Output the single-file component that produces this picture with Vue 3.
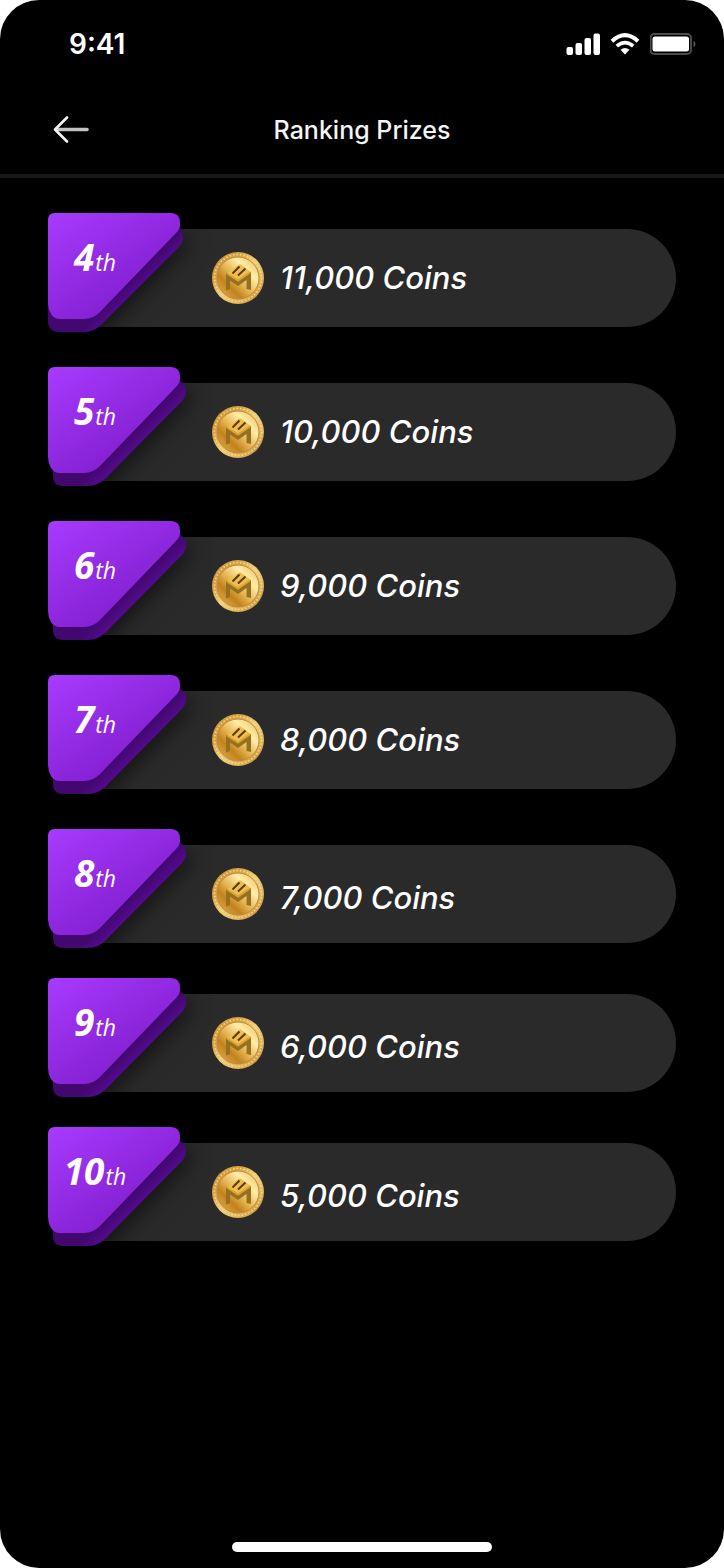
<script setup>
const upper = [
  { rank: 4, coins: '11,000' },
  { rank: 5, coins: '10,000' },
  { rank: 6, coins: '9,000' },
  { rank: 7, coins: '8,000' },
]
const lower = [
  { rank: 8, coins: '7,000' },
  { rank: 9, coins: '6,000' },
  { rank: 10, coins: '5,000' },
]
const prizes = [...upper, ...lower.map((p) => ({ ...p, low: true }))]

const face =
  'M7 0H123Q132 0 132 10V12Q132 16 128 20L52 99Q45 106 36 106H12Q6 106 3 101Q0 96 0 90V7Q0 0 7 0Z'
const wideBase =
  'M0 90V108Q0 119 12 119H36Q46 119 54 111L130 35Q135 30 135 24Q135 16 130 14Z'
const shiftedBase =
  'M5 90V108Q5 119 15 119H40Q50 119 58 111L134 34Q138 29 138 24Q138 16 132 14Z'
</script>

<template>
  <main class="screen">
    <div class="status">
      <time class="clock">9:41</time>
      <div class="indicators">
        <svg width="34" height="22" viewBox="0 0 34 22" fill="#fff" aria-label="Signal">
          <rect x="0.5" y="14" width="6.5" height="8" rx="2" />
          <rect x="9.5" y="10" width="6.5" height="12" rx="2" />
          <rect x="18.5" y="5" width="6.5" height="17" rx="2" />
          <rect x="27.5" y="0.5" width="6.5" height="21.5" rx="2" />
        </svg>
        <svg width="30" height="22" viewBox="0 0 30 22" fill="none" stroke="#fff" stroke-width="4" aria-label="Wi-Fi">
          <path d="M2 8.2Q15-3.8 28 8.2" />
          <path d="M6.8 13.2Q15 6 23.2 13.2" stroke-width="3.6" />
          <path d="M10.5 16.8Q15 13 19.5 16.8L15 21.5Z" fill="#fff" stroke="none" />
        </svg>
        <svg width="46" height="22" viewBox="0 0 46 22" aria-label="Battery">
          <rect x="0.5" y="1" width="40.5" height="20" rx="4" fill="none" stroke="#4b4b4b" stroke-width="2" />
          <rect x="2.5" y="3.5" width="36.5" height="15" rx="2.5" fill="#fff" />
          <path d="M43.5 7.5Q45.5 9 45.5 11Q45.5 13 43.5 14.5Z" fill="#555" />
        </svg>
      </div>
    </div>

    <header class="header">
      <button class="back" type="button" aria-label="Back">
        <svg width="36" height="28" viewBox="0 0 36 28" fill="none" stroke-linecap="round" stroke-linejoin="round">
          <path d="M3 13.5H34" stroke="#c4c2c2" stroke-width="3.5" />
          <path d="M14 1.5L2 13.5L14 25.5" stroke="#f2f2f2" stroke-width="2.6" />
        </svg>
      </button>
      <h1 class="title">Ranking Prizes</h1>
    </header>

    <svg class="defs" width="0" height="0" aria-hidden="true">
      <defs>
        <linearGradient id="face-fill" x1="0" y1="0" x2="0.8" y2="0.9">
          <stop offset="0" stop-color="#a83bff" />
          <stop offset="1" stop-color="#7d1bc9" />
        </linearGradient>
        <linearGradient id="base-fill" gradientUnits="userSpaceOnUse" x1="80" y1="70" x2="90" y2="80">
          <stop offset="0" stop-color="#42086f" />
          <stop offset="1" stop-color="#560a90" />
        </linearGradient>
        <linearGradient id="coin-rim" x1="0" y1="0" x2="1" y2="1">
          <stop offset="0" stop-color="#c58d32" />
          <stop offset="0.3" stop-color="#d9a546" />
          <stop offset="0.5" stop-color="#f0cf7a" />
          <stop offset="0.75" stop-color="#e0b45a" />
          <stop offset="1" stop-color="#b67820" />
        </linearGradient>
        <linearGradient id="coin-face" x1="0.1" y1="0.9" x2="0.9" y2="0.1">
          <stop offset="0" stop-color="#dba645" />
          <stop offset="0.25" stop-color="#c2821e" />
          <stop offset="0.45" stop-color="#e3b14c" />
          <stop offset="0.75" stop-color="#ffedaa" />
          <stop offset="1" stop-color="#f0cb70" />
        </linearGradient>
      </defs>
    </svg>

    <ol class="prizes">
      <li v-for="(p, i) in prizes" :key="p.rank" class="prize" :class="{ low: p.low }">
        <div class="badge">
          <svg class="plate" width="140" height="122" viewBox="0 0 140 122" aria-hidden="true">
            <path class="base" :d="i === 0 ? wideBase : shiftedBase" fill="url(#base-fill)" />
            <path :d="face" fill="url(#face-fill)" />
          </svg>
          <span class="rank"><b>{{ p.rank }}</b><span class="suffix">th</span></span>
        </div>
        <div class="bar">
          <svg class="coin" width="54" height="54" viewBox="0 0 54 54" aria-hidden="true">
            <circle cx="27" cy="27" r="26" fill="url(#coin-rim)" />
            <circle cx="27" cy="27" r="23.5" fill="none" stroke="#f5d98c" stroke-width="1.5" stroke-dasharray="1.5 2" />
            <circle cx="27" cy="27" r="21" fill="url(#coin-face)" stroke="#c08a38" stroke-width="1" />
            <path d="M15 23L29 13L40 21L27 31Z" fill="#f0bd4f" />
            <path d="M15 22L27 30L40 21V39L35.5 38V29L27 35L19 29.5V38L15 39.5Z" fill="#94701f" />
            <path d="M16 22.5L27 29.5L39 21.5" fill="none" stroke="#dba236" stroke-width="2" />
            <path d="M21.5 22.5L28.5 15.5M27 24.5L34.5 17.5" fill="none" stroke="#5c3d10" stroke-width="2" />
          </svg>
          <span class="amount">{{ p.coins }} Coins</span>
        </div>
      </li>
    </ol>

    <div class="home"></div>
  </main>
</template>

<style>
body {
  background: #fff;
}
</style>

<style scoped>
.screen {
  box-sizing: border-box;
  display: flex;
  flex-direction: column;
  min-height: 100vh;
  padding-bottom: 16px;
  border-radius: 39px;
  background: #000;
  color: #fff;
  font-family: Inter, "Liberation Sans", sans-serif;
}
.status {
  display: flex;
  align-items: center;
  justify-content: space-between;
  height: 88px;
  padding: 0 28px 0 69px;
}
.clock {
  font-size: 28px;
  font-weight: 600;
}
.indicators {
  display: flex;
  gap: 10px;
}
.header {
  display: grid;
  grid-template-columns: 1fr auto 1fr;
  align-items: center;
  height: 84px;
  padding: 0 53px 2px;
  border-bottom: 4px solid #181818;
}
.back {
  justify-self: start;
  display: flex;
  padding: 0;
  border: 0;
  background: none;
}
.title {
  margin: 0;
  font-size: 25px;
  font-weight: 500;
  color: #f4f4f4;
}
.defs {
  position: absolute;
}
.prizes {
  display: flex;
  flex-direction: column;
  gap: 40px;
  flex: 1;
  margin: 0;
  padding: 35px 48px;
  list-style: none;
}
.prize {
  display: grid;
  padding-top: 16px;
}
.prize.low + .low {
  margin-top: -5px;
}
.badge {
  grid-area: 1 / 1;
  z-index: 1;
  display: grid;
  width: 132px;
  height: 98px;
  margin-top: -16px;
}
.plate {
  grid-area: 1 / 1;
  overflow: visible;
}
.base {
  filter: drop-shadow(5px 5px 10px rgba(0, 0, 0, 0.5));
}
.rank {
  grid-area: 1 / 1;
  display: flex;
  align-items: baseline;
  justify-content: center;
  gap: 1px;
  width: 94px;
  padding-top: 20px;
  font-family: "Open Sans", sans-serif;
  font-style: italic;
  line-height: 48px;
}
.rank b {
  font-size: 37px;
  font-weight: 700;
}
.suffix {
  font-size: 23px;
}
.bar {
  grid-area: 1 / 1;
  display: flex;
  align-items: center;
  gap: 15px;
  height: 98px;
  margin-left: 20px;
  padding-left: 143px;
  border-radius: 12px 49px 49px 12px;
  background: #2a2a2a;
}
.amount {
  font-size: 31px;
  font-style: italic;
  font-weight: 500;
  line-height: 40px;
}
.low .amount {
  padding-top: 8px;
}
.home {
  align-self: center;
  width: 36%;
  height: 10px;
  border-radius: 5px;
  background: #fff;
}
</style>
